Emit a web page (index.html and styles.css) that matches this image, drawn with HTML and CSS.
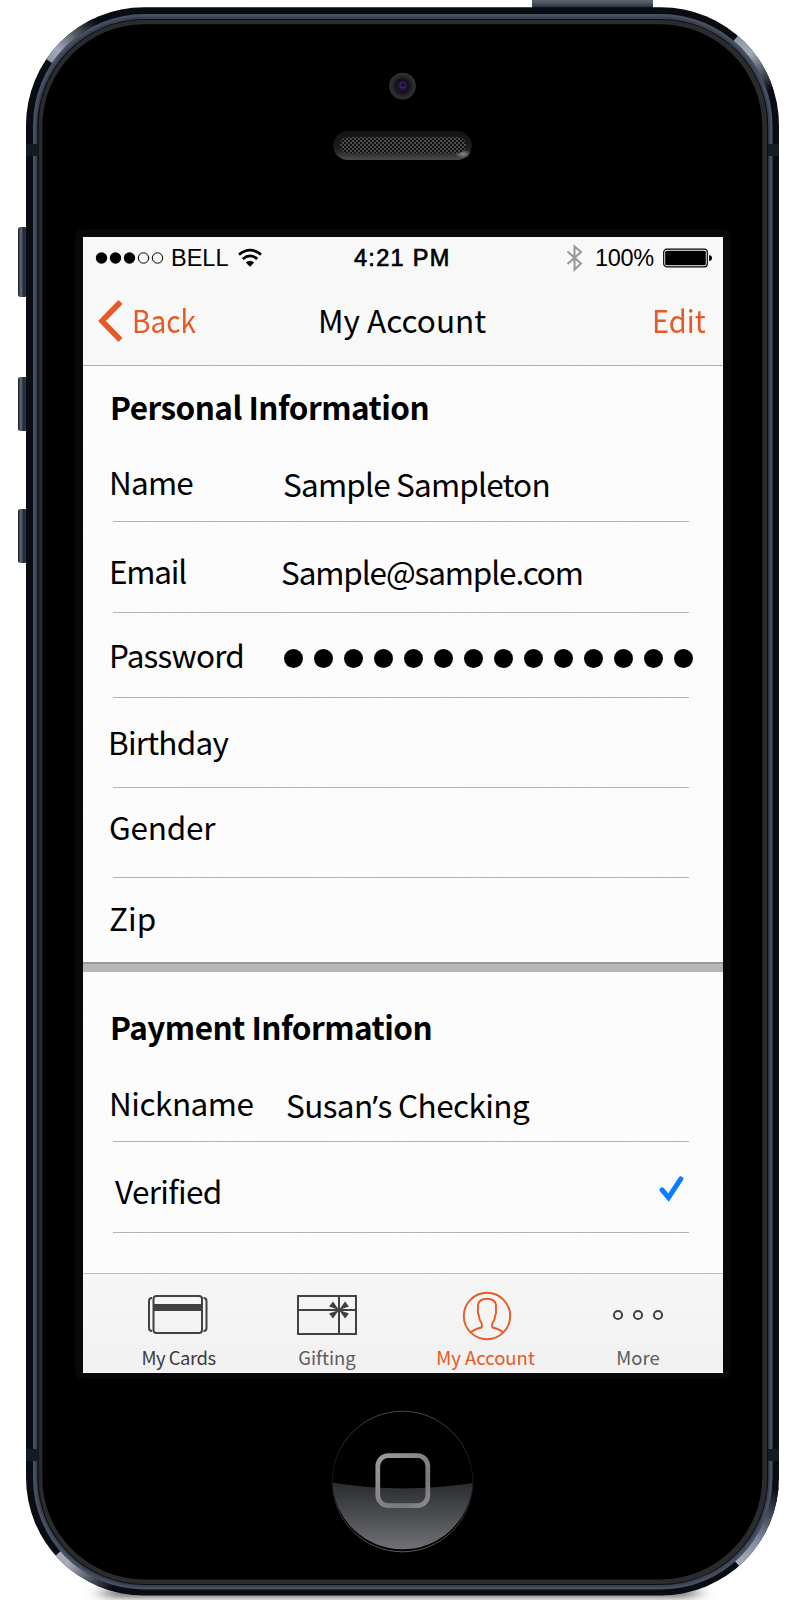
FILE: index.html
```html
<!DOCTYPE html>
<html lang="en">
<head>
<meta charset="utf-8">
<title>My Account</title>
<link rel="stylesheet" href="styles.css">
</head>
<body>
<div class="stage">
  <svg class="device" width="800" height="1600" viewBox="0 0 800 1600" aria-hidden="true">
    <defs>
      <linearGradient id="btn" x1="0" x2="1" y1="0" y2="0"><stop offset="0" stop-color="#151a22"/><stop offset=".3" stop-color="#667080"/><stop offset=".5" stop-color="#262d38"/><stop offset="1" stop-color="#2f3744"/></linearGradient>
      <linearGradient id="topbtn" x1="0" x2="0" y1="0" y2="1"><stop offset="0" stop-color="#4a5360"/><stop offset=".35" stop-color="#59636f"/><stop offset=".8" stop-color="#2d3642"/><stop offset="1" stop-color="#11161c"/></linearGradient>
      <linearGradient id="tl" gradientUnits="userSpaceOnUse" x1="48" y1="62" x2="94" y2="20"><stop offset="0" stop-color="#8f96a3"/><stop offset=".25" stop-color="#a3a9b6"/><stop offset="1" stop-color="#090c10"/></linearGradient>
      <linearGradient id="tr" gradientUnits="userSpaceOnUse" x1="735" y1="37" x2="770" y2="90"><stop offset="0" stop-color="#8f96a3"/><stop offset=".35" stop-color="#a3a9b6"/><stop offset="1" stop-color="#090c10"/></linearGradient>
      <linearGradient id="bl" gradientUnits="userSpaceOnUse" x1="57" y1="1552" x2="112" y2="1588"><stop offset="0" stop-color="#a8adb8"/><stop offset=".25" stop-color="#a3a9b6"/><stop offset="1" stop-color="#090c10"/></linearGradient>
      <linearGradient id="br" gradientUnits="userSpaceOnUse" x1="738" y1="1563" x2="775" y2="1488"><stop offset="0" stop-color="#a8adb8"/><stop offset=".35" stop-color="#8087a0"/><stop offset="1" stop-color="#090c10"/></linearGradient>
      <linearGradient id="gloss" x1="0" x2="0" y1="0" y2="1"><stop offset="0" stop-color="#2a2b2f"/><stop offset="1" stop-color="#707176"/></linearGradient>
      <linearGradient id="sq" x1="0" x2="1" y1="0" y2="1"><stop offset="0" stop-color="#9a9a9e"/><stop offset=".75" stop-color="#77787b"/><stop offset="1" stop-color="#8c8c90"/></linearGradient>
      <linearGradient id="ring" x1="0" x2="0" y1="0" y2="1"><stop offset="0" stop-color="#4a4a4a"/><stop offset=".4" stop-color="#141414"/><stop offset=".6" stop-color="#1c1c1c"/><stop offset="1" stop-color="#5c5c60"/></linearGradient>
      <linearGradient id="slot" x1="0" x2="0" y1="0" y2="1"><stop offset="0" stop-color="#131313"/><stop offset=".6" stop-color="#1d1d1d"/><stop offset="1" stop-color="#4a4a4a"/></linearGradient>
      <radialGradient id="glint"><stop offset="0" stop-color="#8a8a8a"/><stop offset="1" stop-color="#8a8a8a" stop-opacity="0"/></radialGradient>
      <radialGradient id="cam"><stop offset="0" stop-color="#5a2a90"/><stop offset=".3" stop-color="#1c1030"/><stop offset=".5" stop-color="#15121a"/><stop offset=".75" stop-color="#272727"/><stop offset="1" stop-color="#333"/></radialGradient>
      <pattern id="mesh" width="4" height="4" patternUnits="userSpaceOnUse"><rect width="4" height="4" fill="#111"/><rect width="2" height="2" fill="#4c4c4c"/><rect x="2" y="2" width="2" height="2" fill="#4c4c4c"/></pattern>
      <filter id="soft" x="-20%" y="-200%" width="140%" height="500%"><feGaussianBlur stdDeviation="10 3"/></filter>
      <clipPath id="body"><rect x="26" y="7.300" width="753" height="1588.200" rx="118"/></clipPath>
    </defs>
    <rect x="105" y="1588" width="590" height="10" fill="#777" filter="url(#soft)"/>
    <g fill="url(#btn)">
      <rect x="18" y="227" width="10" height="70" rx="2.5"/>
      <rect x="18" y="377" width="10" height="54" rx="2.5"/>
      <rect x="18" y="509" width="10" height="54" rx="2.5"/>
    </g>
    <rect x="532" y="-3" width="121" height="12" rx="2" fill="url(#topbtn)"/>
    <rect x="26" y="7.300" width="753" height="1588.200" rx="118" fill="#090c10"/>
    <g fill="none" stroke-width="8" clip-path="url(#body)">
      <path d="M49 61A114.500 114.500 0 0 1 95 21.500" stroke="url(#tl)"/>
      <path d="M736 38A114.500 114.500 0 0 1 771 91" stroke="url(#tr)"/>
      <path d="M58 1553.500A114.500 114.500 0 0 0 118 1589" stroke="url(#bl)"/>
      <path d="M737 1563.500A114.500 114.500 0 0 0 775.300 1487" stroke="url(#br)"/>
    </g>
    <rect x="33" y="14" width="739.500" height="1575.500" rx="111" fill="#465062"/>
    <rect x="35.500" y="16.500" width="734.500" height="1570.500" rx="109" fill="#3a4150"/>
    <rect x="37.300" y="19" width="731" height="1566" rx="107" fill="#0c0e13"/>
    <rect x="38.800" y="20" width="728.200" height="1564" rx="105" fill="#2a2b2d"/>
    <rect x="42.300" y="24.300" width="720" height="1555.200" rx="102" fill="#000"/>
    <g fill="#131c21">
      <rect x="26" y="144" width="11" height="12"/><rect x="768" y="144" width="11" height="12"/>
      <rect x="26" y="1449" width="11" height="12"/><rect x="768" y="1449" width="11" height="12"/>
    </g>
    <circle cx="402.500" cy="86" r="13.300" fill="url(#cam)"/>
    <circle cx="403" cy="85" r="3" fill="#1a0d45" stroke="#4d2470"/>
    <rect x="333.300" y="131" width="138.400" height="29" rx="14.500" fill="url(#slot)"/>
    <ellipse cx="463" cy="154" rx="8" ry="4.500" fill="url(#glint)"/>
    <rect x="340" y="137" width="126" height="16" rx="8" fill="url(#mesh)"/>
    <rect x="75" y="229" width="656" height="1150" rx="8" fill="#080808"/>
    <circle cx="402.500" cy="1481.500" r="70.300" fill="#000" stroke="url(#ring)"/>
    <path d="M332.300 1482.500Q402.500 1494 472.700 1483A70.300 70.300 0 0 1 332.300 1482.500z" fill="url(#gloss)"/>
    <rect x="377.800" y="1455.700" width="50" height="50" rx="10.500" fill="none" stroke="url(#sq)" stroke-width="4.700"/>
  </svg>

  <main class="screen">
    <div class="status">
      <svg class="signal" width="72" height="14" viewBox="0 0 72 14"><g fill="#000"><circle cx="7.500" cy="7" r="5.700"/><circle cx="21.500" cy="7" r="5.700"/><circle cx="35.500" cy="7" r="5.700"/></g><g fill="none" stroke="#000"><circle cx="49.500" cy="7" r="5.200"/><circle cx="63.500" cy="7" r="5.200"/></g></svg>
      <span class="carrier">BELL</span>
      <svg class="wifi" width="24" height="20" viewBox="0 0 24 20"><g fill="none" stroke="#000" stroke-width="2.800"><path d="M1 6.600Q12-2.400 23 6.600"/><path d="M4.800 11Q12 4.800 19.200 11"/></g><path d="M7.800 14.400Q12 11 16.200 14.400L12 18.800z"/></svg>
      <span class="time">4:21 PM</span>
      <svg class="bluetooth" width="17" height="28" viewBox="0 0 17 28"><path d="M1.500 7.500L15 19.500L8.500 25.500V2.500L15 8L1.500 20" fill="none" stroke="#999" stroke-width="2.100"/></svg>
      <span class="percent">100%</span>
      <svg class="battery" width="50" height="20" viewBox="0 0 50 20"><rect x=".7" y="1.200" width="43.600" height="17.600" rx="3" fill="none" stroke="#000" stroke-width="1.200"/><rect x="2.200" y="2.700" width="40.600" height="14.600" rx="1.600"/><path d="M46 7q3 .5 3 3t-3 3z"/></svg>
    </div>
    <header class="nav">
      <a class="back"><svg width="26" height="44" viewBox="0 0 26 44"><path d="M22.500 3L4 22L22.500 41" fill="none" stroke="#e55a25" stroke-width="5.600"/></svg><span class="back-text">Back</span></a>
      <h1 class="title">My Account</h1>
      <a class="edit">Edit</a>
    </header>

    <section class="panel">
      <h2 class="heading">Personal Information</h2>
      <div class="row name"><span class="label">Name</span><span class="value">Sample Sampleton</span></div>
      <div class="row email"><span class="label">Email</span><span class="value">Sample@sample.com</span></div>
      <div class="row password"><span class="label">Password</span>
        <span class="dots"><i></i><i></i><i></i><i></i><i></i><i></i><i></i><i></i><i></i><i></i><i></i><i></i><i></i><i></i></span></div>
      <div class="row birthday"><span class="label">Birthday</span></div>
      <div class="row gender"><span class="label">Gender</span></div>
      <div class="row zip"><span class="label">Zip</span></div>
    </section>
    <div class="divider"></div>
    <section class="panel payment">
      <h2 class="heading">Payment Information</h2>
      <div class="row nickname"><span class="label">Nickname</span><span class="value">Susan<span class="apostrophe">’</span>s Checking</span></div>
      <div class="row verified"><span class="label">Verified</span>
        <svg class="check" width="28" height="28" viewBox="0 0 28 28"><path d="M4 14.800L10.500 22.500L22.800 3.800" fill="none" stroke="#0a7cff" stroke-width="5" stroke-linecap="round"/></svg></div>
    </section>

    <nav class="tabs">
      <a class="tab cards"><svg width="62" height="42" viewBox="0 0 62 42"><g fill="none" stroke="#404142" stroke-width="2"><rect x="6.500" y="2" width="48.500" height="37" rx="3"/><path d="M5 4Q2 4 2 7V34Q2 37 5 37M56.500 4Q59.500 4 59.500 7V34Q59.500 37 56.500 37"/></g><rect x="6" y="10" width="49" height="7" fill="#404142"/></svg><span>My Cards</span></a>
      <a class="tab gifting"><svg width="62" height="42" viewBox="0 0 62 42"><path d="M2 2H60V40H2zM43 2V40M2 16H60" fill="none" stroke="#404142" stroke-width="2"/><path d="M43 16L37 7.500L33 12.500zM43 16L49 7.500L53 12.500zM43 16L37 24.500L33 19.500zM43 16L49 24.500L53 19.500z" fill="#404142"/></svg><span>Gifting</span></a>
      <a class="tab account"><svg width="50" height="50" viewBox="0 0 50 50"><g fill="none" stroke="#e55a25" stroke-width="1.900"><circle cx="25" cy="25" r="23.200"/><path d="M9 41Q12 38.500 19.500 36.500Q20.500 35 19.500 32Q17 29 16.800 24.500Q15.500 22 16 19V14Q17 7.700 25 7.700T34 14V19Q34.500 22 33.200 24.500Q33 29 30.500 32Q29.500 35 30.500 36.500Q38 38.500 41 41"/></g></svg><span>My Account</span></a>
      <a class="tab more"><svg width="52" height="12" viewBox="0 0 52 12"><g fill="none" stroke="#404142" stroke-width="2"><circle cx="6" cy="6" r="4.100"/><circle cx="26" cy="6" r="4.100"/><circle cx="46" cy="6" r="4.100"/></g></svg><span>More</span></a>
    </nav>
  </main>
</div>
</body>
</html>
```

FILE: styles.css
```css
* { box-sizing: border-box; }
body { margin: 0; background: #fff; }
.stage {
  position: relative;
  width: 800px;
  height: 1600px;
  padding: 237px 0 0 83px;
  overflow: hidden;
}
.device { position: absolute; left: 0; top: 0; }
.screen {
  position: relative;
  display: flex;
  flex-direction: column;
  width: 640px;
  height: 1136px;
  background: #fcfcfc repeating-linear-gradient(135deg, #fdfdfd 0 1.5px, #fafafa 1.5px 3px);
  color: #000;
  font-family: "Noto Sans CJK SC", "Noto Sans", sans-serif;
  font-size: 31.5px;
  line-height: 40px;
  white-space: nowrap;
}
.screen svg { display: block; flex: none; }

.status {
  display: flex;
  align-items: center;
  height: 41px;
  padding-left: 11px;
  background: #f8f8f8;
  font-family: "Liberation Sans", Arial, sans-serif;
  font-size: 23.5px;
}
.carrier { width: 60px; margin-left: 5px; }
.wifi { margin-left: 7px; }
.time { width: 100px; margin-left: 92px; -webkit-text-stroke: .7px #000; letter-spacing: 1.3px; }
.bluetooth { margin-left: 112px; }
.percent { width: 64px; margin-left: 12px; letter-spacing: -.3px; }
.battery { margin-left: 4px; }

.nav {
  display: flex;
  align-items: flex-start;
  height: 88px;
  padding-top: 21px;
  background: #f8f8f8;
  border-bottom: 1px solid #b0b0b0;
}
.nav .back { display: flex; width: 235px; padding-left: 15px; color: #e55a25; }
.nav .back svg { margin-right: 8px; }
.back-text { transform: scaleX(.89); transform-origin: 0 0; }
.title { width: 334px; margin: 0; font-size: inherit; font-weight: 400; }
.edit { color: #e55a25; transform: scaleX(.92); transform-origin: 0 0; }

.panel { padding-left: 30px; }
.heading {
  height: 60px;
  margin: 0 0 0 -3px;
  padding-top: 20px;
  font-size: 31.5px;
  font-weight: 700;
  letter-spacing: -.53px;
}
.payment .heading { height: 73px; padding-top: 34px; }
.row {
  display: flex;
  align-items: flex-start;
  width: 576px;
  border-bottom: 1px solid #b3b3b3;
}
.label { flex: none; width: 174px; margin-left: -4px; letter-spacing: -.78px; }
.value { padding-top: 2px; letter-spacing: -.8px; }
.name { height: 96px; padding-top: 35px; }
.email { height: 91px; padding-top: 28px; }
.email .label { letter-spacing: -1.2px; }
.email .value { padding-top: 1px; margin-left: -2px; letter-spacing: -1.12px; }
.password { height: 85px; padding-top: 21px; }
.birthday { height: 90px; padding-top: 23px; }
.birthday .label { margin-left: -5px; }
.gender { height: 90px; padding-top: 18px; }
.gender .label { letter-spacing: -.2px; }
.zip { height: 84px; padding-top: 19px; border-bottom: 0; }
.zip .label { letter-spacing: 0; }
.nickname { height: 97px; padding-top: 37px; }
.nickname .label { letter-spacing: -.5px; }
.nickname .value { margin-left: 3px; letter-spacing: -.6px; }
.apostrophe { font-family: "Noto Sans", sans-serif; line-height: 1; }
.verified { height: 91px; padding-top: 28px; }
.verified .label { margin-left: 2px; letter-spacing: -.65px; }
.check { margin: 5px 0 0 369px; }
.dots { display: flex; gap: 11px; margin-top: 15px; margin-left: 1px; }
.dots i { flex: none; width: 19px; height: 19px; border-radius: 50%; background: #000; }
.divider { height: 10px; background: #b6b6b6; border-top: 2px solid #999; }

.tabs {
  display: flex;
  height: 100px;
  margin-top: auto;
  padding-left: 20px;
  border-top: 1px solid #bcbcbc;
  border-bottom: 1px solid #fff;
  background: linear-gradient(#f6f6f6, #f1f1f1);
}
.tab {
  display: flex;
  flex-direction: column;
  justify-content: space-between;
  align-items: center;
  padding: 20px 0 2px;
  color: #5c5c5c;
  font-size: 18.5px;
  line-height: 26px;
}
.cards { width: 149px; color: #3c3c3c; letter-spacing: -.5px; }
.cards span { margin-left: 2px; }
.gifting { width: 150px; }
.account { width: 170px; padding-top: 17px; color: #e55a25; }
.account span { margin-right: 3px; }
.more { width: 132px; padding-top: 35px; }
```
